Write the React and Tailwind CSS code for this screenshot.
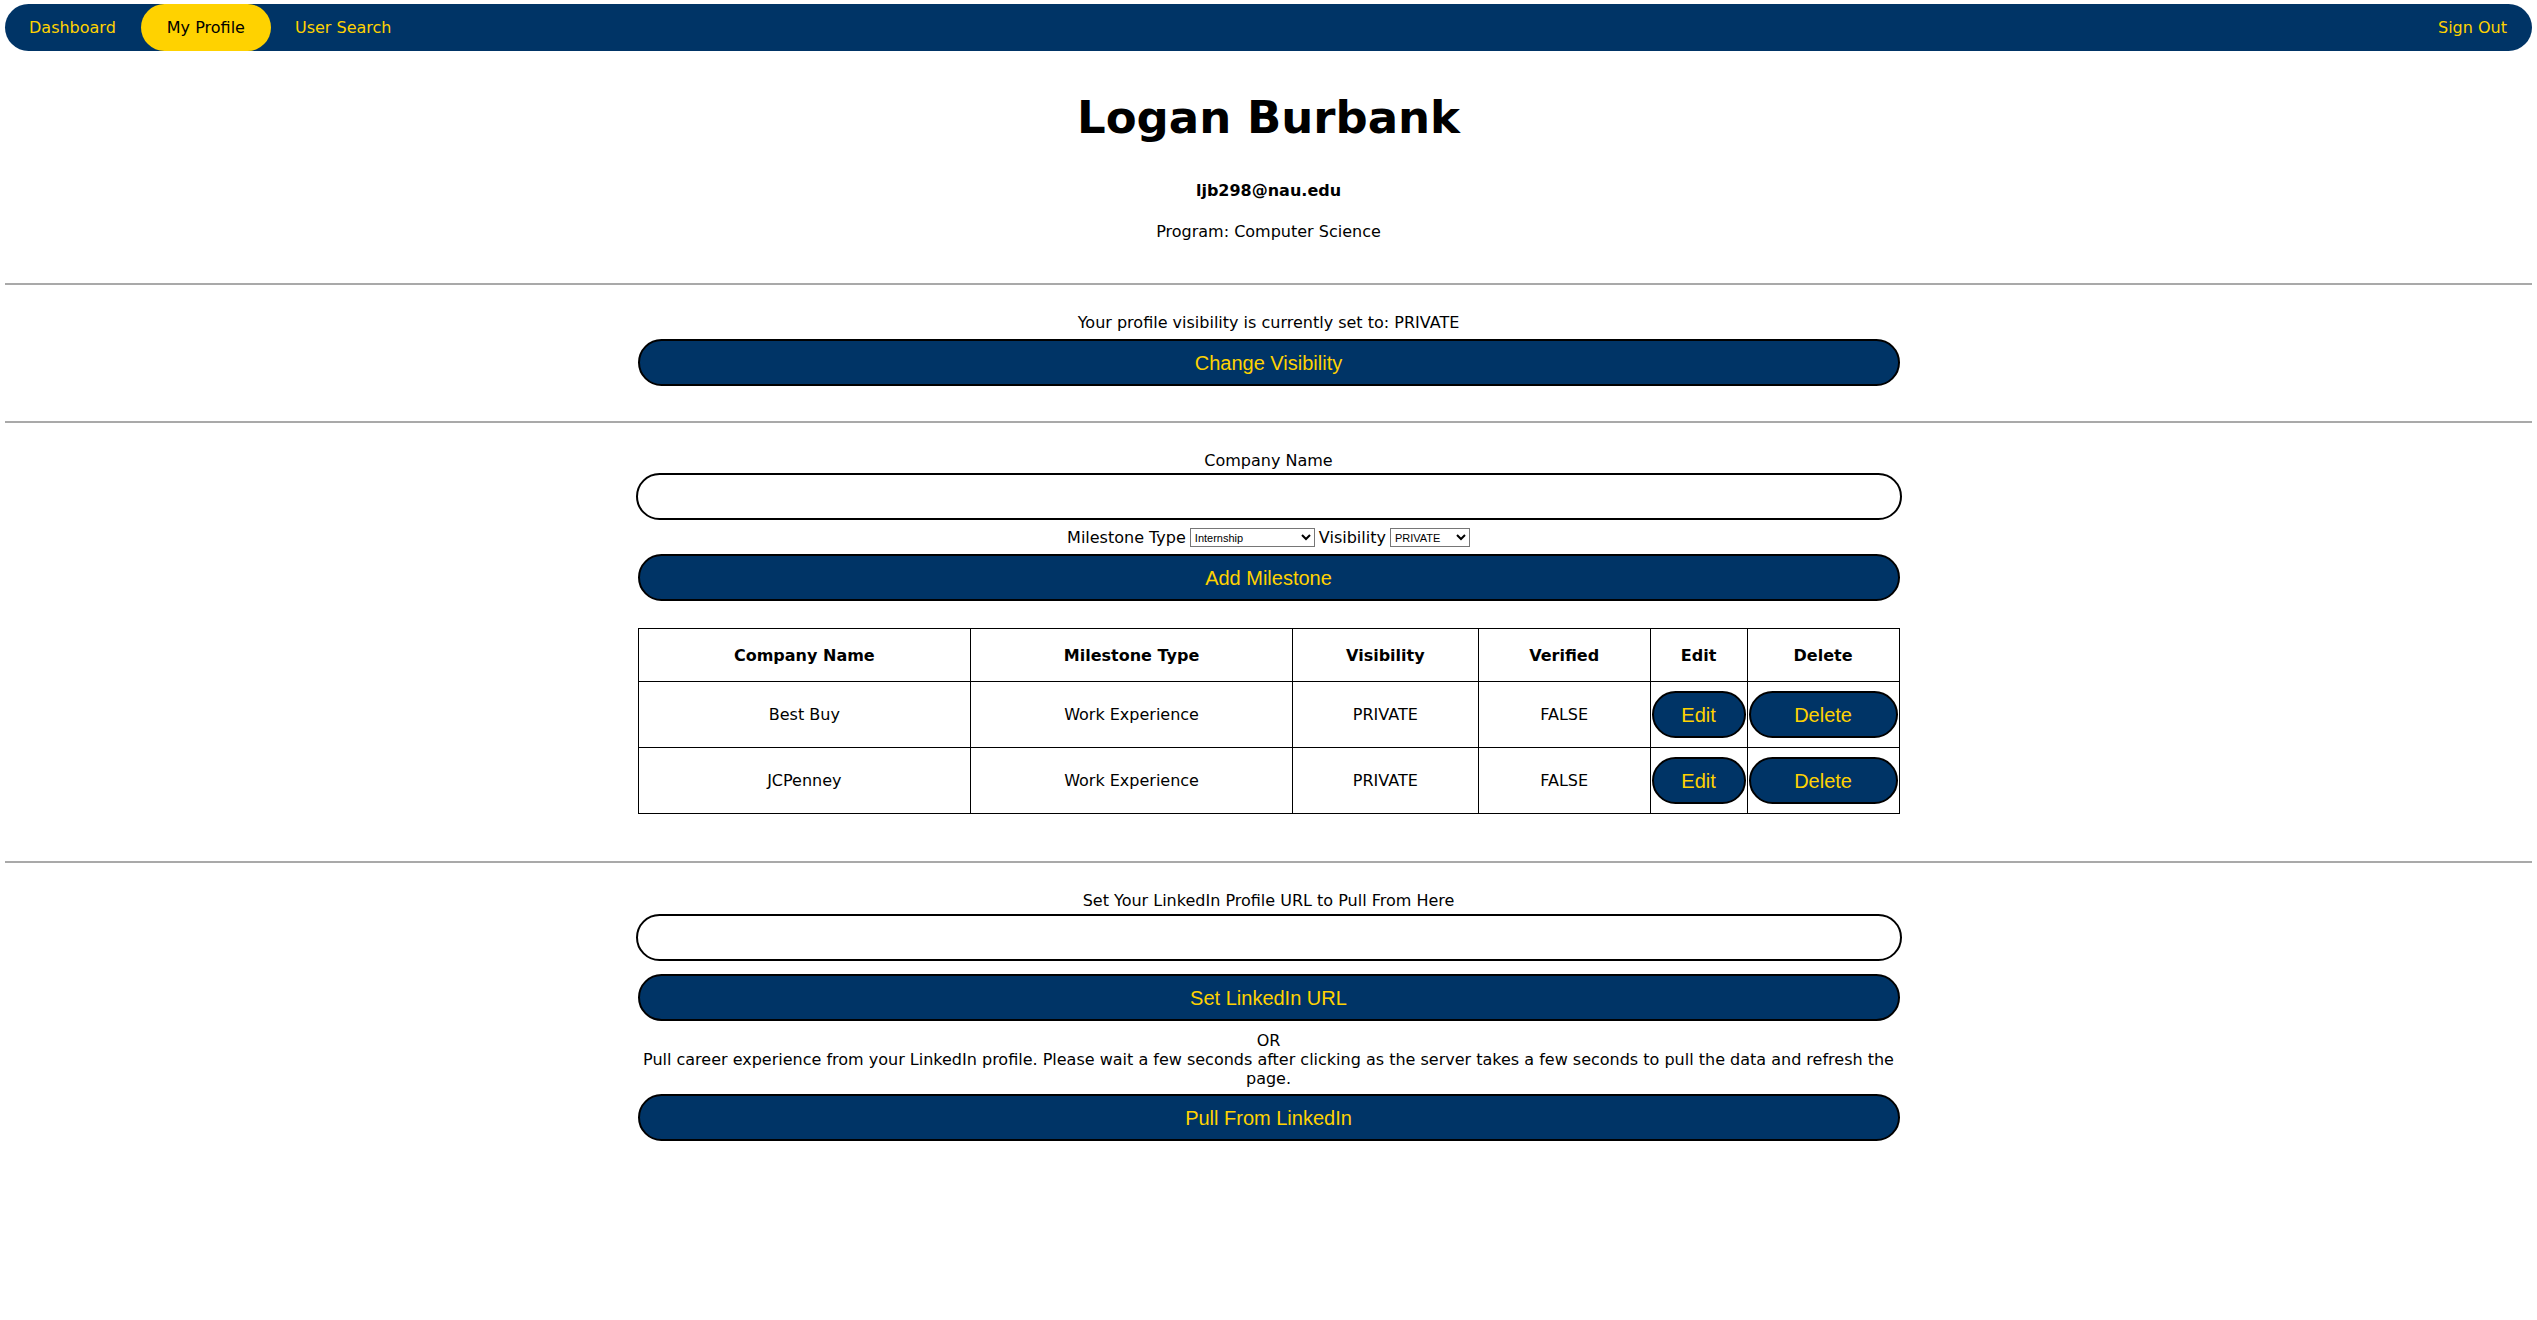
import React, { useState } from "react";

const NAVY = "bg-[#003466]";

// Pill button used throughout the profile page
const PillButton = ({ children, className = "" }) => (
  <button
    className={`${NAVY} text-[#FFD200] border-2 border-black rounded-full font-['Liberation_Sans',Arial,sans-serif] text-[20px] leading-none ${className}`}
  >
    {children}
  </button>
);

const milestones = [
  { id: 1, company: "Best Buy", type: "Work Experience", visibility: "PRIVATE", verified: "FALSE" },
  { id: 2, company: "JCPenney", type: "Work Experience", visibility: "PRIVATE", verified: "FALSE" },
];

const App = () => {
  const [company, setCompany] = useState("");
  const [linkedin, setLinkedin] = useState("");
  const [type, setType] = useState("Internship");
  const [vis, setVis] = useState("PRIVATE");

  return (
    <div className="min-h-screen bg-white text-black font-['DejaVu_Sans',Verdana,sans-serif] text-[16px] leading-[19px]">
      {/* Nav */}
      <nav className={`${NAVY} mx-[5px] mt-[4px] h-[47px] rounded-full flex items-center justify-between`}>
        <div className="flex h-full items-center">
          <a className="pl-[24px] pr-[25px] h-full flex items-center text-[#FFD200]">Dashboard</a>
          <a className="px-[26px] h-full flex items-center bg-[#FFD200] text-black rounded-full">My Profile</a>
          <a className="px-[24px] h-full flex items-center text-[#FFD200]">User Search</a>
        </div>
        <a className="px-[25px] h-full flex items-center text-[#FFD200]">Sign Out</a>
      </nav>

      {/* Header */}
      <div className="flex flex-col items-center">
        <h1 className="mt-[44px] text-[45px] leading-[45px] font-bold">Logan Burbank</h1>
        <p className="mt-[41px] font-bold">ljb298@nau.edu</p>
        <p className="mt-[22px]">Program: Computer Science</p>
      </div>

      <hr className="mx-[5px] mt-[42px] border-0 border-t-2 border-[#a9a9a9]" />

      {/* Visibility */}
      <div className="flex flex-col items-center">
        <p className="mt-[28px]">Your profile visibility is currently set to: PRIVATE</p>
        <PillButton className="mt-[7px] w-[1262px] h-[47px]">Change Visibility</PillButton>
      </div>

      <hr className="mx-[5px] mt-[35px] border-0 border-t-2 border-[#a9a9a9]" />

      {/* Add milestone */}
      <div className="flex flex-col items-center">
        <label className="mt-[28px]">Company Name</label>
        <input
          value={company}
          onChange={(e) => setCompany(e.target.value)}
          className="mt-[3px] w-[1266px] h-[47px] border-2 border-black rounded-full px-4 outline-none"
        />
        <div className="mt-[8px] flex items-center gap-[4px] h-[19px]">
          <span>Milestone Type</span>
          <select
            value={type}
            onChange={(e) => setType(e.target.value)}
            className="w-[125px] h-[19px] border border-[#767676] text-[11px] leading-none font-['Liberation_Sans',Arial,sans-serif] bg-white"
          >
            <option>Internship</option>
            <option>Work Experience</option>
            <option>Research</option>
          </select>
          <span>Visibility</span>
          <select
            value={vis}
            onChange={(e) => setVis(e.target.value)}
            className="w-[80px] h-[19px] border border-[#767676] text-[11px] leading-none font-['Liberation_Sans',Arial,sans-serif] bg-white"
          >
            <option>PRIVATE</option>
            <option>PUBLIC</option>
          </select>
        </div>
        <PillButton className="mt-[7px] w-[1262px] h-[47px]">Add Milestone</PillButton>

        {/* Milestones table */}
        <table className="mt-[27px] w-[1262px] border-collapse border border-black text-center">
          <thead>
            <tr className="h-[53px]">
              <th className="border border-black w-[333px] font-bold">Company Name</th>
              <th className="border border-black w-[322px] font-bold">Milestone Type</th>
              <th className="border border-black w-[186px] font-bold">Visibility</th>
              <th className="border border-black w-[172px] font-bold">Verified</th>
              <th className="border border-black w-[97px] font-bold">Edit</th>
              <th className="border border-black w-[152px] font-bold">Delete</th>
            </tr>
          </thead>
          <tbody>
            {milestones.map((m) => (
              <tr key={m.id} className="h-[66px]">
                <td className="border border-black">{m.company}</td>
                <td className="border border-black">{m.type}</td>
                <td className="border border-black">{m.visibility}</td>
                <td className="border border-black">{m.verified}</td>
                <td className="border border-black px-[1px]">
                  <PillButton className="w-full h-[47px]">Edit</PillButton>
                </td>
                <td className="border border-black px-[1px]">
                  <PillButton className="w-full h-[47px]">Delete</PillButton>
                </td>
              </tr>
            ))}
          </tbody>
        </table>
      </div>

      <hr className="mx-[5px] mt-[47px] border-0 border-t-2 border-[#a9a9a9]" />

      {/* LinkedIn */}
      <div className="flex flex-col items-center pb-[180px]">
        <label className="mt-[28px]">Set Your LinkedIn Profile URL to Pull From Here</label>
        <input
          value={linkedin}
          onChange={(e) => setLinkedin(e.target.value)}
          className="mt-[4px] w-[1266px] h-[47px] border-2 border-black rounded-full px-4 outline-none"
        />
        <PillButton className="mt-[13px] w-[1262px] h-[47px]">Set LinkedIn URL</PillButton>
        <p className="mt-[10px]">OR</p>
        <p className="w-[1262px] text-center">
          Pull career experience from your LinkedIn profile. Please wait a few seconds after clicking as the server takes a few seconds to pull the data and refresh the page.
        </p>
        <PillButton className="mt-[6px] w-[1262px] h-[47px]">Pull From LinkedIn</PillButton>
      </div>
    </div>
  );
};

export default App;
